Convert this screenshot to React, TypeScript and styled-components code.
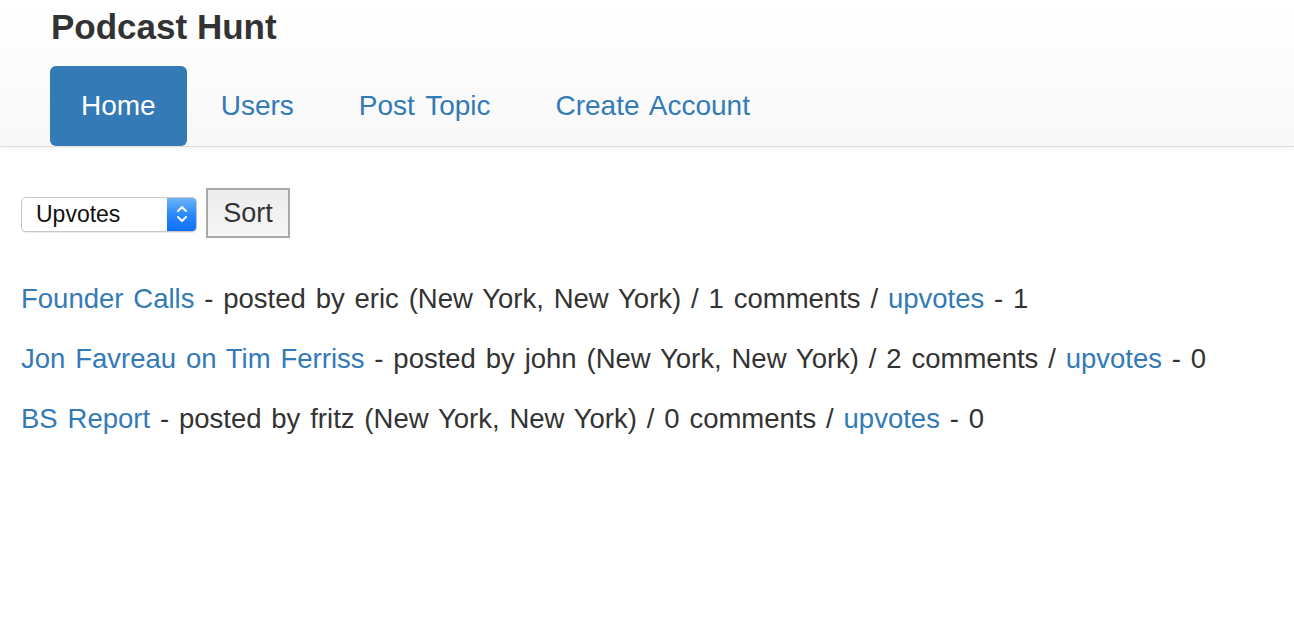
import React from "react";
import styled, { createGlobalStyle } from "styled-components";

const Global = createGlobalStyle`
  html, body { margin: 0; padding: 0; background: #fff; }
  body { font-family: "Liberation Sans", Arial, sans-serif; color: #333; }
  * { box-sizing: border-box; }
`;

const Navbar = styled.header`
  background: linear-gradient(to bottom, #ffffff 0%, #f8f8f8 100%);
  border-bottom: 1px solid #dedede;
  box-shadow: 0 1px 4px rgba(0, 0, 0, 0.06);
  padding: 0 50px;
  height: 147px;
  display: flex;
  flex-direction: column;
`;

const Brand = styled.h1`
  margin: 0;
  padding-top: 7px;
  padding-left: 1px;
  font-size: 35px;
  font-weight: 700;
  line-height: 40px;
  color: #333;
`;

const Pills = styled.nav`
  display: flex;
  margin-top: 19px;
`;

const Pill = styled.a<{ $active?: boolean }>`
  display: flex;
  align-items: center;
  height: 80px;
  padding: 0 31px;
  margin-right: 3px;
  border-radius: 6px;
  font-size: 28px;
  word-spacing: 3px;
  text-decoration: none;
  color: ${(p) => (p.$active ? "#fff" : "#337ab7")};
  background: ${(p) => (p.$active ? "#337ab7" : "transparent")};
`;

const Main = styled.main`
  padding: 41px 21px 0;
`;

const SortForm = styled.form`
  display: flex;
  align-items: center;
  gap: 9px;
  margin-bottom: 45px;
`;

const SelectBox = styled.div`
  display: flex;
  width: 176px;
  height: 35px;
  border: 1px solid #c6c6c6;
  border-radius: 5px;
  background: #fff;
  overflow: hidden;
  box-shadow: 0 1px 1px rgba(0, 0, 0, 0.08);
  margin-top: 2px;
`;

const NativeSelect = styled.select`
  appearance: none;
  -webkit-appearance: none;
  flex: 1;
  border: none;
  background: transparent;
  font-family: "Liberation Sans", Arial, sans-serif;
  font-size: 23px;
  color: #111;
  padding: 0 0 0 14px;
  outline: none;
`;

const Stepper = styled.div`
  width: 29px;
  background: linear-gradient(to bottom, #6cb3fa 0%, #2a8af8 50%, #0d6efb 100%);
  display: flex;
  align-items: center;
  justify-content: center;
`;

const SortButton = styled.button`
  width: 84px;
  height: 50px;
  border: 2px solid #a8a8a8;
  background: linear-gradient(to bottom, #ececec 0%, #f6f6f6 100%);
  font-family: "Liberation Sans", Arial, sans-serif;
  font-size: 27px;
  color: #333;
  padding: 0;
`;

const List = styled.ul`
  list-style: none;
  margin: 0;
  padding: 0;
  display: flex;
  flex-direction: column;
  gap: 28px;
`;

const Row = styled.li`
  font-size: 27.5px;
  word-spacing: 2.2px;
  line-height: 32px;
  color: #333;
  white-space: nowrap;
`;

const Link = styled.a`
  color: #337ab7;
  text-decoration: none;
`;

const posts = [
  { title: "Founder Calls", user: "eric", comments: 1, votes: 1 },
  { title: "Jon Favreau on Tim Ferriss", user: "john", comments: 2, votes: 0 },
  { title: "BS Report", user: "fritz", comments: 0, votes: 0 },
];

export default function App() {
  return (
    <>
      <Global />
      <Navbar>
        <Brand>Podcast Hunt</Brand>
        <Pills>
          <Pill $active href="#">Home</Pill>
          <Pill href="#">Users</Pill>
          <Pill href="#">Post Topic</Pill>
          <Pill href="#">Create Account</Pill>
        </Pills>
      </Navbar>
      <Main>
        <SortForm onSubmit={(e) => e.preventDefault()}>
          <SelectBox>
            <NativeSelect defaultValue="upvotes">
              <option value="upvotes">Upvotes</option>
              <option value="comments">Comments</option>
            </NativeSelect>
            <Stepper>
              <svg width="12" height="24" viewBox="0 0 12 24" fill="none" stroke="#fff" strokeWidth="2" strokeLinecap="round" strokeLinejoin="round">
                <path d="M2 9 L6 5 L10 9" />
                <path d="M2 15 L6 19 L10 15" />
              </svg>
            </Stepper>
          </SelectBox>
          <SortButton type="submit">Sort</SortButton>
        </SortForm>
        <List>
          {posts.map((p) => (
            <Row key={p.title}>
              <Link href="#">{p.title}</Link> - posted by {p.user} (New York, New York) / {p.comments} comments /{" "}
              <Link href="#">upvotes</Link> - {p.votes}
            </Row>
          ))}
        </List>
      </Main>
    </>
  );
}
